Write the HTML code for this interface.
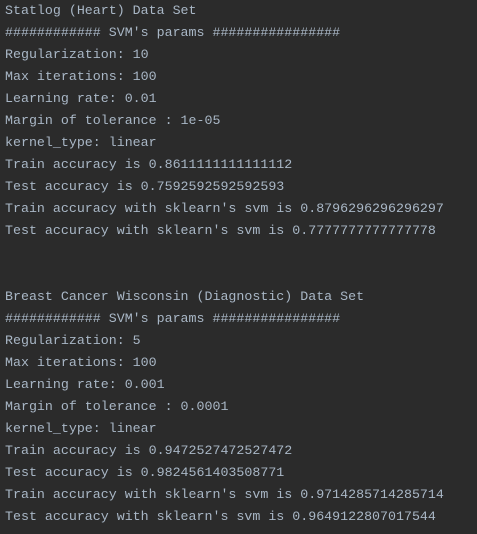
<!DOCTYPE html>
<html><head><meta charset="utf-8"><style>
html,body{margin:0;padding:0;background:#2b2b2b;width:477px;height:534px;overflow:hidden}
pre{margin:0;padding:0 0 0 5px;font-family:"Liberation Mono",monospace;font-size:13.3px;line-height:22px;color:#a9b7c6;white-space:pre}
</style></head><body><pre>Statlog (Heart) Data Set
############ SVM's params ################
Regularization: 10
Max iterations: 100
Learning rate: 0.01
Margin of tolerance : 1e-05
kernel_type: linear
Train accuracy is 0.8611111111111112
Test accuracy is 0.7592592592592593
Train accuracy with sklearn's svm is 0.8796296296296297
Test accuracy with sklearn's svm is 0.7777777777777778


Breast Cancer Wisconsin (Diagnostic) Data Set
############ SVM's params ################
Regularization: 5
Max iterations: 100
Learning rate: 0.001
Margin of tolerance : 0.0001
kernel_type: linear
Train accuracy is 0.9472527472527472
Test accuracy is 0.9824561403508771
Train accuracy with sklearn's svm is 0.9714285714285714
Test accuracy with sklearn's svm is 0.9649122807017544</pre></body></html>
